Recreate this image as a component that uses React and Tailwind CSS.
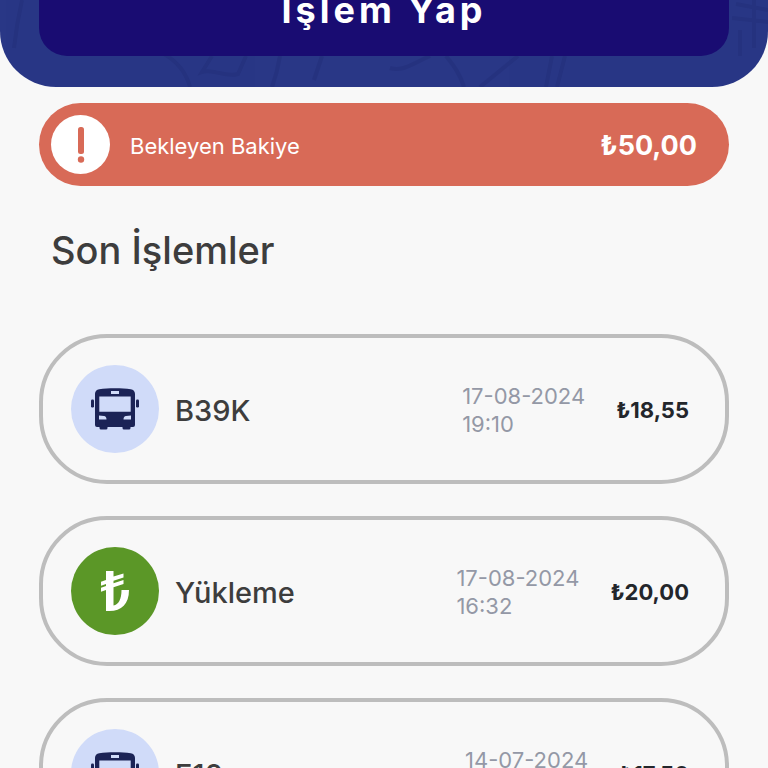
import React from "react";

const transactions = [
  { id: 1, type: "bus", title: "B39K", date: "17-08-2024", time: "19:10", amount: "₺18,55" },
  { id: 2, type: "topup", title: "Yükleme", date: "17-08-2024", time: "16:32", amount: "₺20,00" },
  { id: 3, type: "bus", title: "E10", date: "14-07-2024", time: "08:45", amount: "₺17,50" },
];

const BusIcon = () => (
  <svg viewBox="0 0 48 42" className="w-12" fill="#1b2356" aria-hidden="true">
    <rect x="0" y="11.500" width="3" height="8" rx="1.2" />
    <rect x="45" y="11.500" width="3" height="8" rx="1.2" />
    <path
      fillRule="evenodd"
      d="M4 6C4 3.300 5.600 1.800 8.200 1.300C13 .5 18 .2 24 .2s11 .3 15.800 1.100C42.400 1.800 44 3.300 44 6V37q0 2-2 2h-2.500v1q0 1.500-1.500 1.500h-5q-1.500 0-1.500-1.500v-1h-15v1q0 1.500-1.500 1.500h-5q-1.500 0-1.500-1.500v-1H6q-2 0-2-2ZM20 3v3h8v-3ZM8.300 8.500v15.300h31.400V8.500ZM8 27.500v4h7.500c0-2.500-1-3.200-2.500-3.500ZM40 27.500v4h-7.500c0-2.500 1-3.200 2.500-3.500Z"
    />
  </svg>
);

const LiraIcon = () => (
  <svg viewBox="0 0 28 40" className="w-7" fill="#ffffff" aria-hidden="true">
    <path d="M5 0h7.500v5.500L22.500 2.500v4L12.500 9.700v2.500L22.500 9v4L12.500 16.200V34.500C17.500 33.500 20.500 28.500 20.500 19H28C28 33 20.500 40 8.500 40H5V19L0 20.700v-4l5-1.600v-2L0 14.700v-4l5-1.600Z" />
  </svg>
);

const TransactionCard = ({ item }) => (
  <li className="flex items-center rounded-[68px] border-4 border-[#bdbdbd] py-[27px] pl-7 pr-9">
    <span
      className={
        item.type === "bus"
          ? "flex size-22 shrink-0 items-center justify-center rounded-full bg-[#d0dbf9]"
          : "flex size-22 shrink-0 items-center justify-center rounded-full bg-[#5b9727]"
      }
    >
      {item.type === "bus" ? <BusIcon /> : <LiraIcon />}
    </span>
    <span className="ml-4 flex-1 pt-1 text-[29px] font-medium text-[#3d3d3d]">{item.title}</span>
    <span className="pt-[2px] text-[22px] leading-7 text-[#9498a6]">
      {item.date}
      <br />
      {item.time}
    </span>
    <span className="ml-[31px] pt-[2px] text-[22px] font-bold text-[#23262b]">{item.amount}</span>
  </li>
);

const App = () => {
  return (
    <div className="h-screen overflow-hidden bg-[#f8f8f8] font-['Inter','Open_Sans',sans-serif]">
      {/* Header, scrolled partly out of view */}
      <header className="relative -mt-9 overflow-hidden rounded-b-[56px] bg-[#293786] px-[39px] pb-[31px]">
        <svg
          viewBox="0 0 768 123"
          className="absolute inset-0 w-full"
          fill="none"
          stroke="#222d78"
          strokeWidth="4"
          opacity="0.45"
          aria-hidden="true"
        >
          <path d="M22 36c-4 18-6 30-8 48M164 90c14 8 22 18 26 33M212 92l-10 16c12-4 22 6 36 2l8-18M280 92c-2 12-4 20-8 31M322 92l-8 24M390 104c12 4 22-4 40-12M446 92c8 10 14 18 18 31M518 92l-38 31M565 92l-8 31M552 92l-6 31M736 40l32 6M732 54l36 4M754 36v48M740 66v26" />
        </svg>
        <button className="relative h-23 w-full rounded-[28px] bg-[#190c72] text-[36px] font-bold tracking-[4px] text-white">
          İşlem Yap
        </button>
      </header>

      <main className="px-[39px] pt-4">
        {/* Pending balance */}
        <div className="flex items-center rounded-full bg-[#d86a57] py-3 pl-3 pr-8 text-white">
          <span className="flex size-[59px] shrink-0 items-center justify-center rounded-full bg-white">
            <svg viewBox="0 0 8 36" className="h-9" fill="#d86a57" aria-hidden="true">
              <rect x="1" y="0" width="6" height="27" rx="2.5" />
              <circle cx="4" cy="32.500" r="3.200" />
            </svg>
          </span>
          <span className="ml-5 flex-1 pt-1 text-[22px]">Bekleyen Bakiye</span>
          <span className="pt-1 text-[27px] font-bold">₺50,00</span>
        </div>

        <h1 className="ml-3 mt-10 text-[38px] font-medium leading-12 text-[#3d3d3d]">Son İşlemler</h1>

        <ul className="mt-15 flex flex-col gap-8">
          {transactions.map((item) => (
            <TransactionCard key={item.id} item={item} />
          ))}
        </ul>
      </main>
    </div>
  );
};

export default App;
